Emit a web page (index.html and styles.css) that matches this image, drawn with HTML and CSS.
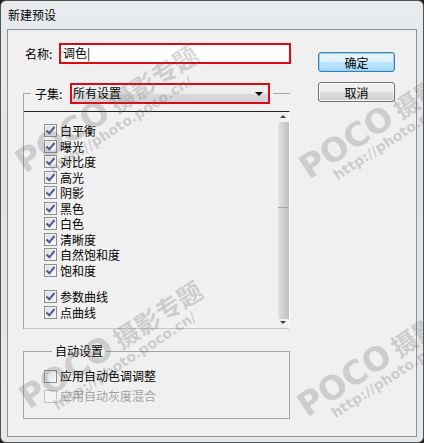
FILE: index.html
```html
<!DOCTYPE html>
<html lang="zh-CN">
<head>
    <meta charset="UTF-8">
    <meta name="viewport" content="width=device-width, initial-scale=1.0">
    <title>新建预设</title>
    <link rel="stylesheet" href="styles.css">
</head>
<body>
    <div class="window">
        <div class="titlebar">新建预设</div>

        <div class="panel">
            <div class="main-col">
                <div class="name-row">
                    <label class="name-label">名称:</label>
                    <div class="name-input">调色|</div>
                </div>

                <fieldset class="subset-group">
                    <legend>
                        <span class="subset-label">子集:</span>
                        <div class="select">
                            <span>所有设置</span>
                            <span class="select-arrow"></span>
                        </div>
                    </legend>
                    <div class="list">
                        <div class="list-items">
                            <div class="check-row"><span class="box checked"></span>白平衡</div>
                            <div class="check-row"><span class="box checked"></span>曝光</div>
                            <div class="check-row"><span class="box checked"></span>对比度</div>
                            <div class="check-row"><span class="box checked"></span>高光</div>
                            <div class="check-row"><span class="box checked"></span>阴影</div>
                            <div class="check-row"><span class="box checked"></span>黑色</div>
                            <div class="check-row"><span class="box checked"></span>白色</div>
                            <div class="check-row"><span class="box checked"></span>清晰度</div>
                            <div class="check-row"><span class="box checked"></span>自然饱和度</div>
                            <div class="check-row"><span class="box checked"></span>饱和度</div>
                            <div class="check-row spaced"><span class="box checked"></span>参数曲线</div>
                            <div class="check-row"><span class="box checked"></span>点曲线</div>
                        </div>
                        <div class="scrollbar">
                            <span class="arrow-up"></span>
                            <div class="thumb"></div>
                            <div class="track"></div>
                            <span class="arrow-down"></span>
                        </div>
                    </div>
                </fieldset>

                <fieldset class="auto-group">
                    <legend>自动设置</legend>
                    <div class="check-row wide"><span class="box"></span>应用自动色调调整</div>
                    <div class="check-row wide disabled"><span class="box"></span>应用自动灰度混合</div>
                </fieldset>
            </div>

            <div class="button-col">
                <button class="btn btn-default">确定</button>
                <button class="btn">取消</button>
            </div>
        </div>

        <div class="wm wm-1"><div class="wm-top"><span class="wm-poco">POCO</span> 摄影专题</div><div class="wm-url">http://photo.poco.cn/</div></div>
        <div class="wm wm-2"><div class="wm-top"><span class="wm-poco">POCO</span> 摄影专题</div><div class="wm-url">http://photo.poco.cn/</div></div>
        <div class="wm wm-3"><div class="wm-top"><span class="wm-poco">POCO</span> 摄影专题</div><div class="wm-url">http://photo.poco.cn/</div></div>
        <div class="wm wm-4"><div class="wm-top"><span class="wm-poco">POCO</span> 摄影专题</div><div class="wm-url">http://photo.poco.cn/</div></div>
    </div>
</body>
</html>
```

FILE: styles.css
```css
* {
    margin: 0;
    padding: 0;
    box-sizing: border-box;
}

body {
    font-family: "Noto Sans CJK SC", "DejaVu Sans", sans-serif;
    font-size: 12px;
    color: #000;
    background-color: #1c1c1c;
    width: 424px;
    height: 443px;
    overflow: hidden;
}

.window {
    position: relative;
    width: 424px;
    height: 443px;
    border: 1px solid #555;
    border-radius: 6px;
    background: linear-gradient(180deg, #e9ecef 0%, #dfe4e8 40%, #e6e9ec 100%);
    overflow: hidden;
}

.titlebar {
    height: 28px;
    padding: 6px 0 0 7px;
    line-height: 16px;
    font-size: 12px;
}

/* dialog body */
.panel {
    display: flex;
    margin: 0 6px 0 6px;
    height: 408px;
    padding: 13px 0 0 15px;
    background-color: #f0f0f0;
    border: 1px solid #8d9093;
}

.main-col {
    width: 268px;
}

.name-row {
    display: flex;
    align-items: center;
    height: 21px;
}

.name-label {
    width: 36px;
    padding-left: 2px;
    line-height: 16px;
}

.name-input {
    width: 233px;
    height: 21px;
    border: 2px solid #dc0a14;
    background-color: #fff;
    padding-left: 2px;
    line-height: 16px;
}

fieldset {
    border: 1px solid #a5a5a5;
}

.subset-group {
    margin-top: 19px;
    width: 267px;
    border-width: 1px 0 0 1px;
}

.subset-group legend {
    display: flex;
    align-items: center;
    margin-left: 7px;
    padding: 0 3px 0 4px;
}

.subset-label {
    width: 35px;
    line-height: 16px;
}

.select {
    position: relative;
    width: 200px;
    height: 21px;
    border: 2px solid #dc0a14;
    background: linear-gradient(180deg, #f4f4f4 0%, #ebebeb 50%, #dadada 51%, #d2d2d2 100%);
    padding-left: 1px;
    line-height: 16px;
}

.select-arrow {
    position: absolute;
    right: 5px;
    top: 7px;
    border-left: 4px solid transparent;
    border-right: 4px solid transparent;
    border-top: 4px solid #000;
}

.list {
    display: flex;
    justify-content: space-between;
    margin-top: 7px;
    height: 218px;
    border-top: 1px solid #222;
    border-bottom: 1px solid #c8c8c8;
    border-right: 1px solid #fff;
    background-color: #f1f1f1;
}

.list-items {
    padding: 11px 0 0 20px;
}

.check-row {
    display: flex;
    align-items: center;
    height: 15.5px;
    line-height: 15.5px;
}

.check-row.spaced {
    margin-top: 11px;
}

.check-row.wide {
    height: 20px;
}

.check-row.disabled {
    color: #a3a3a3;
}

.box {
    position: relative;
    width: 13px;
    height: 13px;
    margin-right: 3px;
    border: 1px solid #8e8f8f;
    background: linear-gradient(135deg, #dcdcdc 0%, #f8f8f8 100%);
    box-shadow: inset 0 0 0 1px #f4f4f4;
}

.box.checked::after {
    content: "";
    position: absolute;
    left: 3px;
    top: 0px;
    width: 3px;
    height: 7px;
    border-right: 2px solid #4a5f97;
    border-bottom: 2px solid #4a5f97;
    transform: rotate(40deg);
}

.disabled .box {
    border-color: #c2c2c2;
    background: #f4f4f4;
}

.scrollbar {
    position: relative;
    display: flex;
    flex-direction: column;
    width: 11px;
    margin: 1px 0 0 0;
    padding: 9px 0 9px 0;
}

.thumb {
    height: 86px;
    background: linear-gradient(90deg, #e4e4e4 0%, #cfcfcf 60%, #bcbcbc 100%);
    border-bottom: 1px solid #a9a9a9;
}

.track {
    flex: 1;
    background: linear-gradient(90deg, #e0e0e0 0%, #cdcdcd 60%, #bdbdbd 100%);
}

.arrow-up,
.arrow-down {
    position: absolute;
    left: 2px;
    border-left: 3px solid transparent;
    border-right: 3px solid transparent;
}

.arrow-up {
    top: 2px;
    border-bottom: 3px solid #444;
}

.arrow-down {
    bottom: 4px;
    border-top: 3px solid #444;
}

.auto-group {
    margin-top: 14px;
    width: 267px;
    height: 76px;
    padding: 7px 0 0 20px;
}

.auto-group legend {
    margin-left: 8px;
    padding: 0 3px;
    line-height: 16px;
}

/* right buttons */
.button-col {
    display: flex;
    flex-direction: column;
    gap: 10px;
    margin: 9px 0 0 27px;
}

.btn {
    width: 77px;
    height: 20px;
    font-family: inherit;
    font-size: 12px;
    color: #000;
    border: 1px solid #707070;
    border-radius: 3px;
    background: linear-gradient(180deg, #f2f2f2 0%, #ebebeb 50%, #dddddd 51%, #cfcfcf 100%);
    box-shadow: inset 0 0 0 1px #fcfcfc;
}

.btn-default {
    border-color: #3c7fb1;
    background: linear-gradient(180deg, #eaf6fd 0%, #d9f0fc 50%, #bee6fd 51%, #a7d9f5 100%);
    box-shadow: inset 0 0 0 1px #8fd0f5;
}

/* watermark */
.wm {
    position: absolute;
    transform: rotate(-33deg);
    transform-origin: 0 100%;
    color: rgba(100, 100, 100, 0.26);
    font-weight: bold;
    white-space: nowrap;
    pointer-events: none;
}

.wm-top {
    font-size: 25px;
    line-height: 30px;
}

.wm-poco {
    font-family: "DejaVu Sans", sans-serif;
    font-size: 33px;
}

.wm-url {
    font-family: "DejaVu Sans", sans-serif;
    font-size: 14px;
    line-height: 15px;
    margin-left: 24px;
}

.wm-1 { left: 34px; bottom: 252px; }
.wm-2 { left: 318px; bottom: 246px; }
.wm-3 { left: 38px; bottom: 16px; }
.wm-4 { left: 316px; bottom: 8px; }
```
